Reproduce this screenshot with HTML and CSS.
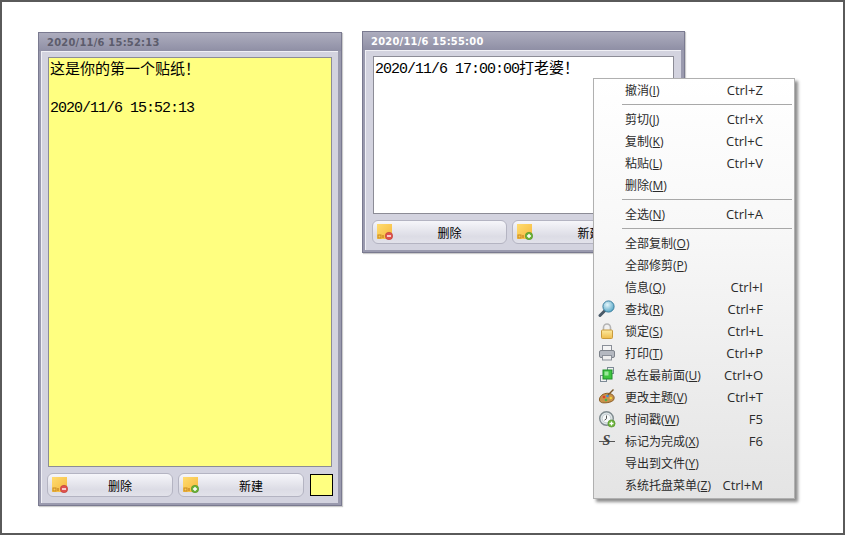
FILE: index.html
```html
<!DOCTYPE html>
<html lang="zh-CN">
<head>
<meta charset="utf-8">
<title>贴纸</title>
<link rel="stylesheet" href="styles.css">
</head>
<body>
<svg class="defs" width="0" height="0">
  <defs>
    <linearGradient id="ng" x1="0" y1="0" x2="1" y2="1"><stop offset="0" stop-color="#ffdc70"/><stop offset="1" stop-color="#f5b83c"/></linearGradient>
    <symbol id="note" viewBox="0 0 16 16">
      <rect x="0" y="0" width="15" height="15" fill="url(#ng)"/>
      <rect x="1" y="11" width="3" height="3" fill="none" stroke="#c98a20"/>
      <rect x="5" y="11" width="2" height="3" fill="#d99a30"/>
    </symbol>
  </defs>
</svg>

<div class="desk">
  <section class="note note-a">
    <h2 class="title title-dim">2020/11/6 15:52:13</h2>
    <div class="panel">
      <div class="paper paper-yellow">
        <p class="line"><span class="cjk">这是你的第一个贴纸&#xFF01;</span></p>
        <p class="line line-gap">2020/11/6 15:52:13</p>
      </div>
      <div class="actions">
        <button class="btn"><svg class="btn-ico" viewBox="0 0 16 16"><use href="#note"/><circle cx="12" cy="12" r="3.7" fill="#e0524e" stroke="#b8403c" stroke-width=".6"/><rect x="10" y="11.3" width="4" height="1.4" fill="#fff"/></svg><span class="btn-label">删除</span></button>
        <button class="btn"><svg class="btn-ico" viewBox="0 0 16 16"><use href="#note"/><circle cx="12" cy="12" r="3.7" fill="#6cb33a" stroke="#4f8f28" stroke-width=".6"/><path d="M10 12h4M12 10v4" stroke="#fff" stroke-width="1.4"/></svg><span class="btn-label">新建</span></button>
        <div class="swatch"></div>
      </div>
    </div>
  </section>

  <section class="note note-b">
    <h2 class="title">2020/11/6 15:55:00</h2>
    <div class="panel">
      <div class="paper paper-white">
        <p class="line">2020/11/6 17:00:00<span class="cjk">打老婆&#xFF01;</span></p>
      </div>
      <div class="actions">
        <button class="btn"><svg class="btn-ico" viewBox="0 0 16 16"><use href="#note"/><circle cx="12" cy="12" r="3.7" fill="#e0524e" stroke="#b8403c" stroke-width=".6"/><rect x="10" y="11.3" width="4" height="1.4" fill="#fff"/></svg><span class="btn-label">删除</span></button>
        <button class="btn"><svg class="btn-ico" viewBox="0 0 16 16"><use href="#note"/><circle cx="12" cy="12" r="3.7" fill="#6cb33a" stroke="#4f8f28" stroke-width=".6"/><path d="M10 12h4M12 10v4" stroke="#fff" stroke-width="1.4"/></svg><span class="btn-label">新建</span></button>
      </div>
    </div>
  </section>

  <nav class="menu">
    <div class="item"><span class="ico"></span><span class="name">撤消(<u>I</u>)</span><span class="key">Ctrl+Z</span></div>
    <hr class="sep">
    <div class="item"><span class="ico"></span><span class="name">剪切(<u>J</u>)</span><span class="key">Ctrl+X</span></div>
    <div class="item"><span class="ico"></span><span class="name">复制(<u>K</u>)</span><span class="key">Ctrl+C</span></div>
    <div class="item"><span class="ico"></span><span class="name">粘贴(<u>L</u>)</span><span class="key">Ctrl+V</span></div>
    <div class="item"><span class="ico"></span><span class="name">删除(<u>M</u>)</span><span class="key"></span></div>
    <hr class="sep">
    <div class="item"><span class="ico"></span><span class="name">全选(<u>N</u>)</span><span class="key">Ctrl+A</span></div>
    <hr class="sep">
    <div class="item"><span class="ico"></span><span class="name">全部复制(<u>O</u>)</span><span class="key"></span></div>
    <div class="item"><span class="ico"></span><span class="name">全部修剪(<u>P</u>)</span><span class="key"></span></div>
    <div class="item"><span class="ico"></span><span class="name">信息(<u>Q</u>)</span><span class="key">Ctrl+I</span></div>
    <div class="item"><span class="ico"><svg viewBox="0 0 18 18" class="mi"><defs><radialGradient id="lens" cx=".4" cy=".35" r=".7"><stop offset="0" stop-color="#e4f6fb"/><stop offset="1" stop-color="#4fa3c4"/></radialGradient></defs><path d="M7 10.5 2 15.5" stroke="#4a5a68" stroke-width="3" stroke-linecap="round"/><circle cx="10.500" cy="6.500" r="5.600" fill="url(#lens)" stroke="#3b7f9f"/></svg></span><span class="name">查找(<u>R</u>)</span><span class="key">Ctrl+F</span></div>
    <div class="item"><span class="ico"><svg viewBox="0 0 18 18" class="mi"><defs><linearGradient id="lock" x1="0" y1="0" x2="0" y2="1"><stop offset="0" stop-color="#fdeaa0"/><stop offset="1" stop-color="#eebc4a"/></linearGradient></defs><path d="M5.500 8V5.500a3.500 3.500 0 0 1 7 0V8" fill="none" stroke="#b4b4b4" stroke-width="1.600"/><rect x="3.500" y="8" width="11" height="8.500" rx="1" fill="url(#lock)" stroke="#c99a3c"/></svg></span><span class="name">锁定(<u>S</u>)</span><span class="key">Ctrl+L</span></div>
    <div class="item"><span class="ico"><svg viewBox="0 0 18 18" class="mi"><rect x="4.500" y="1.500" width="9" height="6" fill="#f4f4f4" stroke="#8a8f98"/><rect x="1.500" y="6.500" width="15" height="7" rx="1.500" fill="#b4b8c0" stroke="#7d828a"/><rect x="4.500" y="11.500" width="9" height="4.500" fill="#eee" stroke="#8a8f98"/></svg></span><span class="name">打印(<u>T</u>)</span><span class="key">Ctrl+P</span></div>
    <div class="item"><span class="ico"><svg viewBox="0 0 18 18" class="mi"><rect x="9.500" y="1.500" width="6" height="6" fill="#f2f2f2" stroke="#7c8a96"/><rect x="2.500" y="9.500" width="6" height="6" fill="#f2f2f2" stroke="#7c8a96"/><rect x="5" y="4" width="9" height="9" fill="#3ec43e" stroke="#1f8f2a"/><rect x="6.500" y="5.500" width="4" height="4" fill="#9be89b"/></svg></span><span class="name">总在最前面(<u>U</u>)</span><span class="key">Ctrl+O</span></div>
    <div class="item"><span class="ico"><svg viewBox="0 0 18 18" class="mi"><path d="M1.500 11C2 7 7 4.500 11.500 5.500 16 6.500 17 9.500 15.500 12 14 14.500 6 15.500 3.500 14.500 1.800 13.800 1.300 12.500 1.500 11Z" fill="#c9924a" stroke="#8a5f28"/><circle cx="6" cy="9" r="1.300" fill="#e23b2e"/><circle cx="9.500" cy="8" r="1.300" fill="#3d8fe0"/><circle cx="12.800" cy="10" r="1.300" fill="#f2d23a"/><circle cx="8" cy="12" r="1.300" fill="#4eb04a"/><path d="M10 7 15.500 1.500" stroke="#7a5a2c" stroke-width="1.500"/></svg></span><span class="name">更改主题(<u>V</u>)</span><span class="key">Ctrl+T</span></div>
    <div class="item"><span class="ico"><svg viewBox="0 0 18 18" class="mi"><circle cx="8.500" cy="8.500" r="6.800" fill="#dfe6e8" stroke="#7e8a8e" stroke-width="1.400"/><circle cx="8.500" cy="8.500" r="4.300" fill="#f7fafa" stroke="#a9b4b8" stroke-width=".6"/><path d="M8.500 5.500v3.200l-2 1.500" fill="none" stroke="#555" stroke-width="1"/><circle cx="13.500" cy="13.500" r="3.600" fill="#6cb33a" stroke="#4f8f28" stroke-width=".6"/><path d="M11.500 13.500h4M13.500 11.500v4" stroke="#fff" stroke-width="1.300"/></svg></span><span class="name">时间戳(<u>W</u>)</span><span class="key">F5</span></div>
    <div class="item"><span class="ico"><span class="strike">S</span></span><span class="name">标记为完成(<u>X</u>)</span><span class="key">F6</span></div>
    <div class="item"><span class="ico"></span><span class="name">导出到文件(<u>Y</u>)</span><span class="key"></span></div>
    <div class="item"><span class="ico"></span><span class="name">系统托盘菜单(<u>Z</u>)</span><span class="key">Ctrl+M</span></div>
  </nav>
</div>
</body>
</html>
```
FILE: styles.css
```css
* { box-sizing: border-box; }
html, body { margin: 0; padding: 0; }
body { width: 845px; height: 535px; overflow: hidden; background: #fff; }
.defs { position: absolute; }
.desk {
  position: relative;
  width: 845px; height: 535px;
  border: 2px solid #5a5a5a;
  background: #fff;
}
.note {
  position: absolute;
  display: flex; flex-direction: column;
  border: 1px solid #7a7a90;
  background: #9a9aae;
  box-shadow: 1px 1px 1px rgba(0,0,0,.2);
}
.note-a { left: 36px; top: 30px; width: 304px; height: 474px; }
.note-b { left: 360px; top: 29px; width: 323px; height: 222px; }
.title {
  margin: 0; height: 18px; flex: none;
  padding: 3px 0 0 8px;
  font: bold 11px/13px "DejaVu Sans Condensed", "DejaVu Sans", sans-serif;
  letter-spacing: .25px;
  color: #fff;
  background: linear-gradient(#adadbe, #8f8fa5);
}
.title-dim { color: #5c5c6c; }
.panel {
  flex: 1;
  display: flex; flex-direction: column;
  margin: 0 3px 2px 2px;
  padding: 5px 6px 6px 6px;
  background: #d3d3df;
  border: 1px solid #f0f0f5;
  border-width: 1px 0 0 1px;
}
.note-b .panel { padding-left: 7px; padding-right: 7px; }
.paper {
  flex: 1;
  border: 1px solid #8c8c96;
  padding: 0 1px;
  font: 15px/20px "Liberation Mono", "Noto Sans CJK SC", monospace;
  letter-spacing: -1px;
  color: #000;
}
.paper-yellow { background: #ffff80; }
.paper-white { background: #fff; }
.line { margin: 0; height: 20px; line-height: 20px; white-space: nowrap; }
.line-gap { margin-top: 21px; }
.cjk { font: 15px/20px "Noto Sans CJK SC", sans-serif; letter-spacing: 0; }
.actions { display: flex; gap: 5px; margin: 6px -1px 0; height: 24px; align-items: stretch; flex: none; }
.btn {
  flex: 0 0 126px;
  display: flex; align-items: center;
  padding: 0 0 0 4px;
  border: 1px solid #b4b4c2;
  border-radius: 6px;
  background: linear-gradient(#f6f6fa, #dcdce5 70%, #e2e2ea);
  font: 12px "Noto Sans CJK SC", sans-serif;
  color: #000;
}
.note-b .btn { flex: 0 0 135px; }
.btn-ico { width: 16px; height: 16px; flex: none; }
.btn-label { flex: 1; text-align: center; }
.swatch {
  width: 23px; height: 22px; margin: 1px 0 0 1px;
  background: #ffff80;
  border: 1px solid #000;
}
.menu {
  position: absolute;
  left: 591px; top: 76px;
  width: 202px; height: 421px;
  padding: 0 1px 1px;
  border: 1px solid #b0b0b0;
  background: linear-gradient(#ffffff, #f8f8f8 35%, #e4e4e4);
  box-shadow: 3px 3px 3px rgba(0,0,0,.45);
  font: 12px "Noto Sans CJK SC", sans-serif;
  color: #2b2b2b;
}
.item { display: flex; align-items: center; height: 22px; white-space: nowrap; }
.ico { flex: 0 0 30px; padding-right: 7px; display: flex; align-items: center; justify-content: center; height: 18px; }
.mi { width: 18px; height: 18px; flex: none; }
.name { flex: 1; font-family: "Open Sans", "Noto Sans CJK SC", sans-serif; }
.key { margin-right: 30px; font-size: 13px; font-family: "Open Sans", sans-serif; }
.strike {
  display: block; width: 16px;
  text-align: center;
  font: italic bold 14px/18px "Liberation Serif", serif;
  color: #444;
  background: linear-gradient(#555, #555) center / 100% 1px no-repeat;
}
.sep { height: 1px; margin: 3px 1px 3px 27px; border: 0; background: #a8a8a8; }
```
